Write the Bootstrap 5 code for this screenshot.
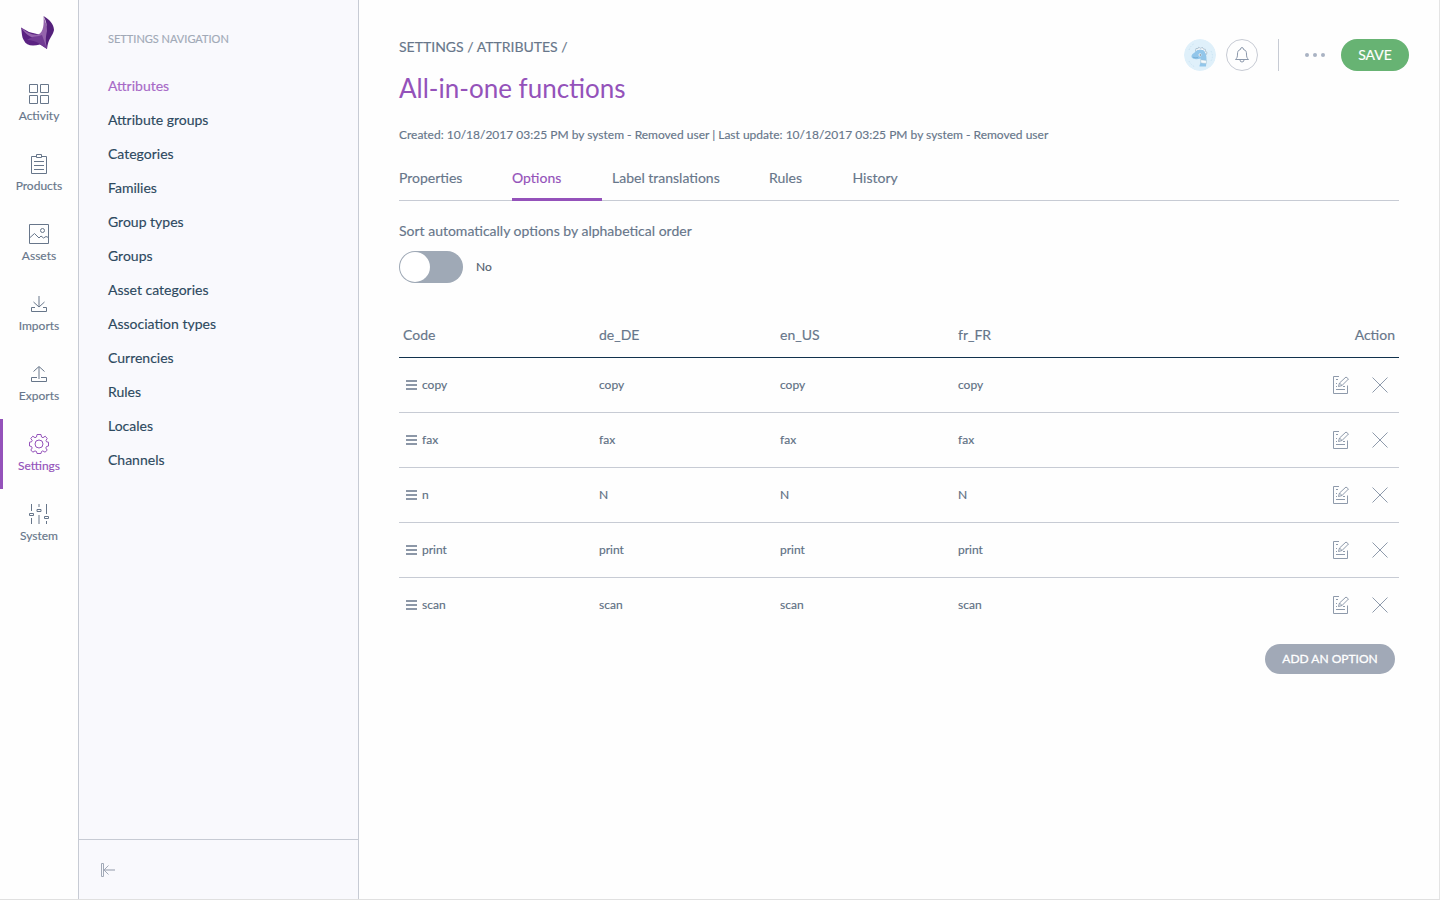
<!DOCTYPE html>
<html lang="en">
<head>
<meta charset="utf-8">
<title>All-in-one functions</title>
<link href="https://cdn.jsdelivr.net/npm/bootstrap@5.3.0/dist/css/bootstrap.min.css" rel="stylesheet">
<style>
:root{--slate:#67768a;--purple:#9452ba;--line:#c7cbd4;--navy:#11324d}
body{font-family:Lato,sans-serif;font-size:14px;line-height:20px;color:var(--slate);background:#fefefe;-webkit-text-stroke:.15px}
.app{height:900px;overflow:hidden;border-right:1px solid #e4e4e4;border-bottom:1px solid #e0e0e0}
svg{fill:none;stroke:currentColor;stroke-width:1;display:block;flex:none}
a{color:inherit;text-decoration:none}
.rail{width:79px;border-right:1px solid var(--line)}
.brand{height:69px;padding:15px 0 0 20px}
.brand svg,.avatar{stroke:none}
.rail .nav-link{height:70px;padding:15px 0 0;font-size:12px;line-height:16px;color:var(--slate);gap:4px;width:78px}
.rail .nav-link.active{color:var(--purple);box-shadow:inset 3px 0 var(--purple)}
.side{width:280px;border-right:1px solid var(--line);background:#f9f9fd;color:#2d4960}
.side h2{font-size:11px;line-height:20px;color:#a1a9b7;margin:29px 0 20px 29px}
.side .nav-link{padding:7px 29px;line-height:20px;color:#2d4960}
.side .nav-link.active{color:#a769c7}
.collapser{height:60px;border-top:1px solid var(--line);padding:23px 0 0 22px;color:#a1a9b7}
.main{padding:37px 40px 0}
.crumbs{font-size:14px;line-height:20px}
h1{font-size:26px;line-height:36px;color:var(--purple);margin:13px 0 19px;-webkit-text-stroke:0}
.meta{font-size:12px;line-height:20px}
.tools{height:32px;margin:2px -10px 0 0}
.round{width:32px;height:32px;border-radius:50%}
.bell{border:1px solid #c7cbd4;color:#8b98ab;margin-left:10px}
.vr-line{width:1px;height:32px;background:var(--line);margin:0 26px 0 20px}
.save{width:68px;height:32px;border-radius:16px;background:#67b373;color:#fff;font-size:14px;padding:0 0 2px;margin-left:16px;border:0}
.tabs{height:44px;margin-top:12px;border-bottom:1px solid var(--line)}
.tabs .nav-link{padding:11px 0 0;height:44px;margin-right:10px;line-height:20px;color:var(--slate);border-bottom:3px solid transparent}
.tabs .nav-link.active{color:var(--purple);border-color:var(--purple)}
.sort-label{margin:20px 0 10px}
.switcher{width:64px;height:32px;border-radius:16px;background:#9fa9b6;padding:1px}
.switcher span{display:block;width:30px;height:30px;border-radius:50%;background:#fff}
.state{margin-left:13px;color:#52606f}
.grid{table-layout:fixed;margin:29px 0 0;color:var(--slate);font-size:12px;--bs-table-bg:transparent;--bs-table-color:var(--slate)}
.grid th{font-size:14px;font-weight:400;height:45px;padding:2px 4px 0;vertical-align:middle;border-bottom:1px solid var(--navy);color:var(--slate)}
.grid td{height:55px;padding:0 4px;vertical-align:middle;border-bottom:1px solid var(--line);color:#5d6f83}
.grid tr:last-child td{border-bottom-color:transparent}
.drag{margin:0 5px 0 3px;color:#67768a}
.ops{gap:23px;padding-right:7px;color:#8e9aab}
.add{width:130px;height:30px;border-radius:15px;background:#a1a9b7;color:#fff;font-size:12px;padding:1px 0 0;margin:11px 4px 0 0;border:0;-webkit-text-stroke:.3px}
</style>
</head>
<body>
<svg width="0" height="0" class="position-absolute">
<symbol id="drag" viewBox="0 0 11 10"><path d="M0 1h11M0 5h11M0 9h11" stroke-width="1.7"/></symbol>
<symbol id="edit" viewBox="0 0 16 18"><path d="M6 .5H.5v17h14V9.500M3 3.500h2M3 7.500h1M3 10.500h1M3 13.500h9M10 10.500h2"/><path d="M5.500 10.500l1-3.500 6.500-6 2.500 2-6.500 6.500zM6.500 7l2.500 2.500"/></symbol>
<symbol id="cross" viewBox="0 0 16 16"><path d="M.5.5l15 15M15.500.5l-15 15"/></symbol>
</svg>
<div class="app d-flex">
<nav class="rail flex-shrink-0">
<div class="brand"><svg width="36" height="36" viewBox="0 0 36 36"><path d="M1 12.500L9 17l12 3 5-3 1 17-7-4.500c-8 2-14 1-16-4C1.500 22 2 17 1 12.500z" fill="#5b2282"/><path d="M1 12.500c6 5 11 8 17 7 6-2 6-12 5.500-18.500l4 12L27 34l-6-9c-8-1-14-4-20-12.500z" fill="#9464ac"/><path d="M7 25c7-5 11-3 15-5l5 14-7-5c-5-3-8-4-13-4z" fill="#713b93"/><path d="M23.500 1C30 5 33.500 9 34 15c-1 6-6 8-7 19-2-9-1-13 0-18 0-6-1-11-3.500-15z" fill="#54207b"/></svg></div>
<div class="nav flex-column text-center">
<a class="nav-link d-flex flex-column align-items-center" href="#"><svg width="20" height="20"><path d="M.5.5h8v8h-8zM11.500.5h8v8h-8zM.5 11.500h8v8h-8zM11.500 11.500h8v8h-8z"/></svg>Activity</a>
<a class="nav-link d-flex flex-column align-items-center" href="#"><svg width="20" height="20"><path d="M7 2.500H2.500v17h15v-17H13M7.500.5h5v3h-5zM5 7.500h10M5 11.500h10M5 15.500h10"/></svg>Products</a>
<a class="nav-link d-flex flex-column align-items-center" href="#"><svg width="20" height="20"><path d="M.5.5h19v19H.5zM.5 14L5.500 9.500l4.500 4.500 2-2 2.500 2 2.500-1.500 2.500 1"/><circle cx="13.500" cy="6.500" r="2"/></svg>Assets</a>
<a class="nav-link d-flex flex-column align-items-center" href="#"><svg width="20" height="20"><path d="M6 13.500H2.500v4h15v-4H14M4.500 8l5.500 5 5.500-5"/><path d="M10 2v11" stroke-width="2" opacity=".5"/></svg>Imports</a>
<a class="nav-link d-flex flex-column align-items-center" href="#"><svg width="20" height="20"><path d="M8 13.500H2.500v4h15v-4H12M4.500 7.500L10 2.500l5.500 5"/><path d="M10 3v12" stroke-width="2" opacity=".5"/></svg>Exports</a>
<a class="nav-link active d-flex flex-column align-items-center" href="#"><svg width="20" height="20"><path d="M8 .5h4l.5 2.500 1.500.7 2.200-1.500 2 2.200L17 6.500l.5 1.300 2 .4v3.800l-2 .5-.7 1.500 1.400 2.200-2.200 2-2.200-1.300-1.300.6-.5 2H8l-.5-2-1.500-.6-2.200 1.300-2-2.200L3.200 14l-.7-1.500-2-.5V8.200l2-.4L3.200 6.500 1.800 4.400l2-2.200L6 3.700 7.500 3z"/><circle cx="10" cy="10" r="4"/></svg>Settings</a>
<a class="nav-link d-flex flex-column align-items-center" href="#"><svg width="20" height="20"><path d="M2.500 0v7M2.500 14v6M17.500 0v10M17.500 17v3M.5 9.500h4v2h-4zM8 5.500h4v2H8zM15.500 12.500h4v2h-4z"/><path d="M10 0v3M10 11v9" stroke-width="2" opacity=".5"/></svg>System</a>
</div>
</nav>
<aside class="side flex-shrink-0 d-flex flex-column">
<h2 class="fw-normal text-nowrap">SETTINGS NAVIGATION</h2>
<nav class="nav flex-column flex-nowrap">
<a class="nav-link active" href="#">Attributes</a><a class="nav-link" href="#">Attribute groups</a><a class="nav-link" href="#">Categories</a><a class="nav-link" href="#">Families</a><a class="nav-link" href="#">Group types</a><a class="nav-link" href="#">Groups</a><a class="nav-link" href="#">Asset categories</a><a class="nav-link" href="#">Association types</a><a class="nav-link" href="#">Currencies</a><a class="nav-link" href="#">Rules</a><a class="nav-link" href="#">Locales</a><a class="nav-link" href="#">Channels</a>
</nav>
<div class="collapser mt-auto"><svg width="15" height="14"><path d="M.5.500h2v13h-2zM7.500 2.500L3 7l4.500 4.500"/><path d="M3 7h11" stroke-width="2" opacity=".6"/></svg></div>
</aside>
<main class="main flex-grow-1">
<header class="d-flex justify-content-between">
<div><div class="crumbs">SETTINGS / ATTRIBUTES /</div><h1 class="fw-normal">All-in-one functions</h1><div class="meta">Created: 10/18/2017 03:25 PM by system - Removed user | Last update: 10/18/2017 03:25 PM by system - Removed user</div></div>
<div class="tools d-flex align-items-center">
<svg class="round avatar" width="32" height="32" viewBox="0 0 32 32"><circle cx="16" cy="16" r="16" fill="#dff0fa"/><path d="M11.500 12l.5-2.500 2 .3.500-1.500 2 1 2-.8.8 1.600 2 .2v2l1.700 1-.5 2-10-2z" fill="#fff" stroke="#8aa5b8" stroke-width=".6"/><path d="M7.500 17.500c0-2.500 2.500-3 4-5 2-2.500 7.500-3 9.500.5 1.500 3 1.500 5.500 1.500 8L22 27.500h-6.500c0-2.500 2-4 1-8-3 .8-5 .8-7 .2-1.200-.5-2-1.200-2-2.200z" fill="#92c6ea"/><path d="M16.500 20.800l6 .7-.3 3-5.200-.6z" fill="#f7fbfd" stroke="#9dbacb" stroke-width=".4"/><circle cx="16" cy="16" r="1.400" fill="#fff"/><circle cx="16.200" cy="16" r=".7" fill="#405870"/><path d="M9 18.300q3 .7 5 .2" fill="none" stroke="#6aa3c9" stroke-width=".6"/><path d="M27 12q3 5 0 10M5 11q2-5 5-6M5 22q2 4 6 6" fill="none" stroke="#c3e0f0" stroke-width=".7" stroke-dasharray="1.500 1.500"/></svg>
<div class="round bell d-flex align-items-center justify-content-center"><svg width="14" height="16"><path d="M5.500 2.500q0-2 1.500-2t1.500 2C11 3 11.500 5 11.500 7c0 3 .5 4 2 5.500H.5C2 11 2.500 10 2.500 7c0-2 .5-4 3-4.500zM5 13q0 2 2 2t2-2"/></svg></div>
<div class="vr-line"></div>
<svg width="20" height="4"><g fill="#a9b3c3" stroke="none"><circle cx="2" cy="2" r="2"/><circle cx="10" cy="2" r="2"/><circle cx="18" cy="2" r="2"/></g></svg>
<button class="btn save">SAVE</button>
</div>
</header>
<nav class="tabs nav">
<a class="nav-link" href="#" style="width:103px">Properties</a><a class="nav-link active" href="#" style="width:90px">Options</a><a class="nav-link" href="#" style="width:147px">Label translations</a><a class="nav-link" href="#" style="width:73.500px">Rules</a><a class="nav-link" href="#">History</a>
</nav>
<div class="sort-label">Sort automatically options by alphabetical order</div>
<div class="d-flex align-items-center"><div class="switcher"><span></span></div><span class="meta state">No</span></div>
<table class="grid table">
<colgroup><col style="width:196px"><col style="width:181px"><col style="width:178px"><col><col style="width:150px"></colgroup>
<thead><tr><th>Code</th><th>de_DE</th><th>en_US</th><th>fr_FR</th><th class="text-end">Action</th></tr></thead>
<tbody>
<tr><td><div class="d-flex align-items-center"><svg width="11" height="10" class="drag"><use href="#drag"/></svg>copy</div></td><td>copy</td><td>copy</td><td>copy</td><td><div class="ops d-flex justify-content-end align-items-center"><svg width="16" height="18"><use href="#edit"/></svg><svg width="16" height="16"><use href="#cross"/></svg></div></td></tr>
<tr><td><div class="d-flex align-items-center"><svg width="11" height="10" class="drag"><use href="#drag"/></svg>fax</div></td><td>fax</td><td>fax</td><td>fax</td><td><div class="ops d-flex justify-content-end align-items-center"><svg width="16" height="18"><use href="#edit"/></svg><svg width="16" height="16"><use href="#cross"/></svg></div></td></tr>
<tr><td><div class="d-flex align-items-center"><svg width="11" height="10" class="drag"><use href="#drag"/></svg>n</div></td><td>N</td><td>N</td><td>N</td><td><div class="ops d-flex justify-content-end align-items-center"><svg width="16" height="18"><use href="#edit"/></svg><svg width="16" height="16"><use href="#cross"/></svg></div></td></tr>
<tr><td><div class="d-flex align-items-center"><svg width="11" height="10" class="drag"><use href="#drag"/></svg>print</div></td><td>print</td><td>print</td><td>print</td><td><div class="ops d-flex justify-content-end align-items-center"><svg width="16" height="18"><use href="#edit"/></svg><svg width="16" height="16"><use href="#cross"/></svg></div></td></tr>
<tr><td><div class="d-flex align-items-center"><svg width="11" height="10" class="drag"><use href="#drag"/></svg>scan</div></td><td>scan</td><td>scan</td><td>scan</td><td><div class="ops d-flex justify-content-end align-items-center"><svg width="16" height="18"><use href="#edit"/></svg><svg width="16" height="16"><use href="#cross"/></svg></div></td></tr>
</tbody></table>
<div class="text-end"><button class="btn add">ADD AN OPTION</button></div>
</main>
</div>
<script src="https://cdn.jsdelivr.net/npm/bootstrap@5.3.0/dist/js/bootstrap.bundle.min.js"></script>
</body>
</html>
